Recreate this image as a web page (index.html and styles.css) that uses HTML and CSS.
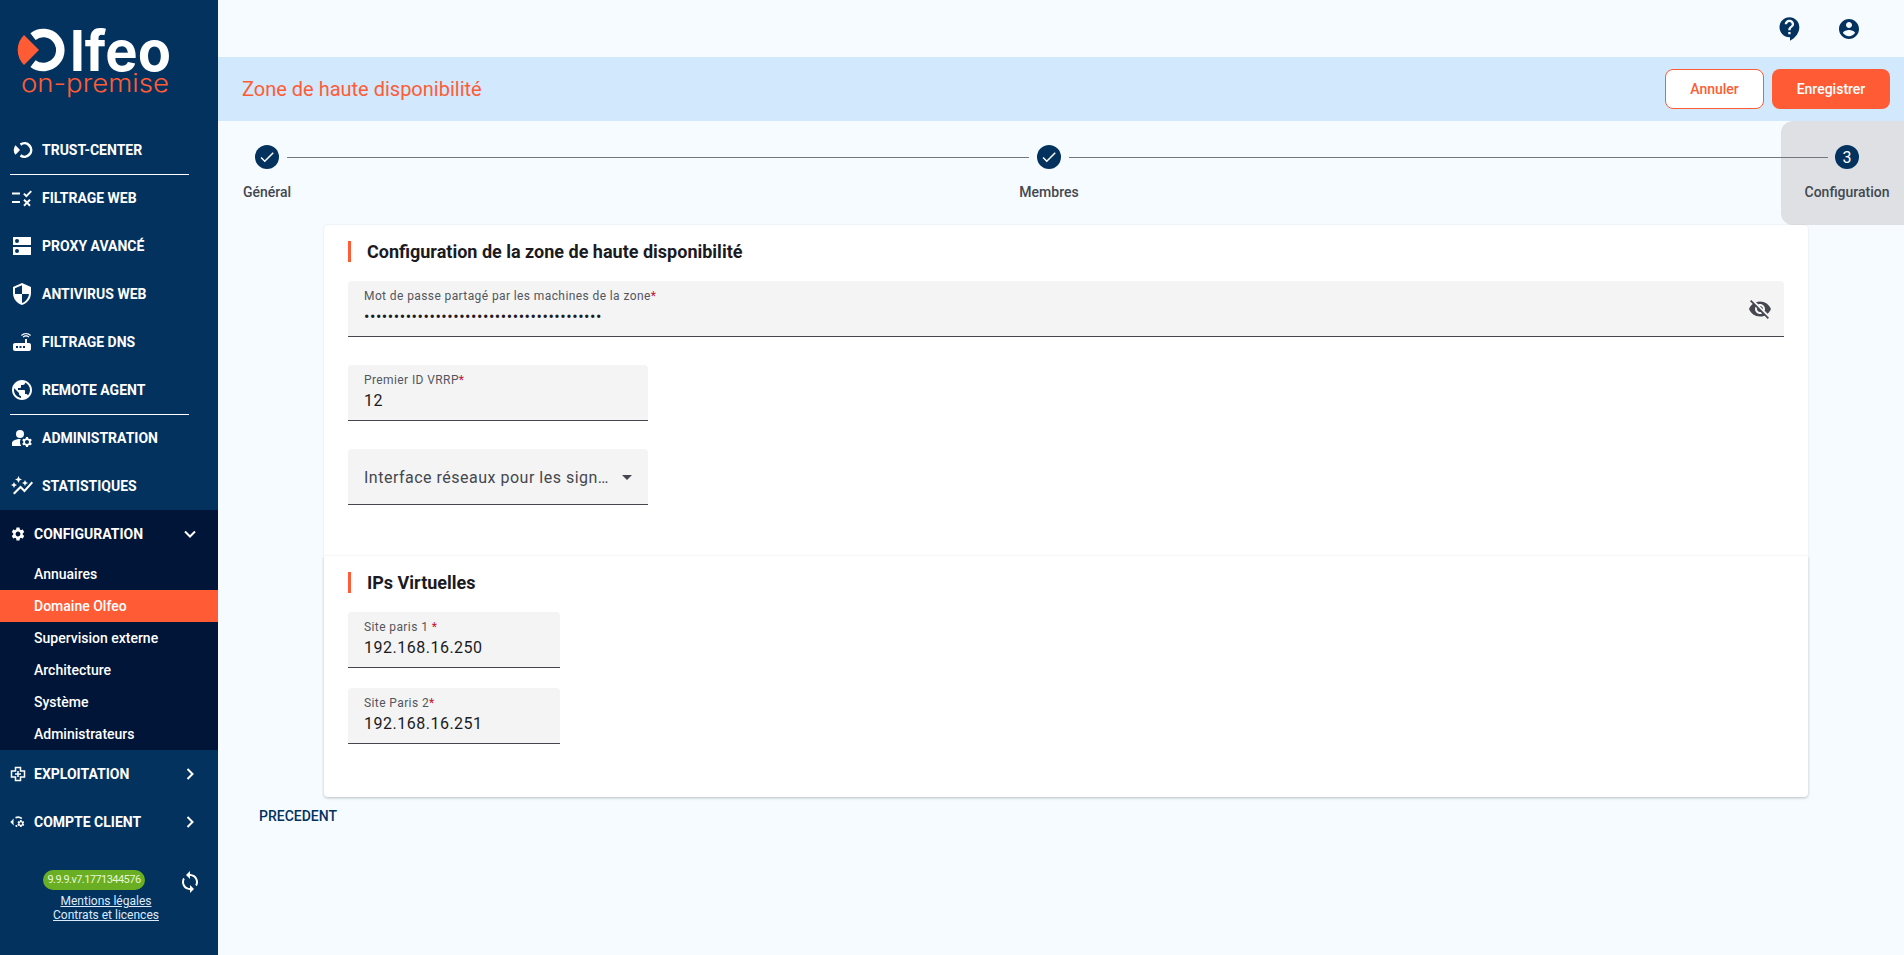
FILE: index.html
```html
<!DOCTYPE html>
<html lang="fr">
<head>
<meta charset="utf-8">
<title>Zone de haute disponibilité</title>
<link rel="stylesheet" href="styles.css">
</head>
<body>
<div class="app">
  <aside class="sidebar">
    <div class="logo">
      <svg class="logo-svg" width="218" height="126" viewBox="0 0 218 126">
        <path class="logo-orange" d="M39 50 L24 35 A21 21 0 0 0 24 65 Z"/>
        <path class="logo-ring" d="M33 36.500 A17 17 0 1 1 33 63.500" />
        <text class="logo-main" x="70" y="70.500" textLength="101" lengthAdjust="spacingAndGlyphs">lfeo</text>
        <text class="logo-sub" x="21" y="92" textLength="148" lengthAdjust="spacingAndGlyphs">on-premise</text>
      </svg>
    </div>
    <nav class="nav">
      <a class="nav-item sep"><span class="ico"><svg width="24" height="24" viewBox="0 0 24 24"><path d="M10 12L5.500 7.300A 7 7 0 0 0 5.500 16.700Z"/><path class="ring-stroke" d="M10.500 6.600A 6.700 6.700 0 1 1 10.500 17.400"/></svg></span><span>TRUST-CENTER</span></a>
      <a class="nav-item"><span class="ico"><svg width="24" height="24" viewBox="0 0 24 24"><path d="M2 6.500h8v2H2zM2 15h8v2H2zM13.200 8.200l1.300-1.300 1.900 1.900 4.200-4.300 1.300 1.300-5.500 5.600zM13.300 14.400l1.400-1.400 2.300 2.300 2.300-2.300 1.400 1.400-2.300 2.300 2.300 2.300-1.400 1.400-2.300-2.300-2.300 2.300-1.400-1.400 2.300-2.300z"/></svg></span><span>FILTRAGE WEB</span></a>
      <a class="nav-item"><span class="ico"><svg width="24" height="24" viewBox="0 0 24 24"><path fill-rule="evenodd" d="M3 3h18v8H3zM3 13h18v8H3zM7 5a2 2 0 1 0 0 4 2 2 0 0 0 0-4zM7 15a2 2 0 1 0 0 4 2 2 0 0 0 0-4z"/></svg></span><span>PROXY AVANCÉ</span></a>
      <a class="nav-item"><span class="ico"><svg width="24" height="24" viewBox="0 0 24 24"><path d="M12 1L3 5v6c0 5.550 3.840 10.740 9 12 5.160-1.260 9-6.450 9-12V5l-9-4zm0 10.990h7c-.53 4.120-3.280 7.790-7 8.940V12H5V6.300l7-3.110v8.800z"/></svg></span><span>ANTIVIRUS WEB</span></a>
      <a class="nav-item"><span class="ico"><svg width="24" height="24" viewBox="0 0 24 24"><path d="M20.200 5.900l.8-.8C19.600 3.700 17.800 3 16 3s-3.600.7-5 2.100l.8.8C13 4.800 14.500 4.200 16 4.200s3 .6 4.200 1.700zm-.9.8c-.9-.9-2.100-1.400-3.300-1.400s-2.400.5-3.300 1.400l.8.8c.7-.7 1.600-1 2.500-1 .9 0 1.800.3 2.500 1l.8-.8zM19 13h-2V9h-2v4H5c-1.100 0-2 .9-2 2v4c0 1.100.9 2 2 2h14c1.100 0 2-.9 2-2v-4c0-1.100-.9-2-2-2zM8 18H6v-2h2v2zm3.500 0h-2v-2h2v2zm3.500 0h-2v-2h2v2z"/></svg></span><span>FILTRAGE DNS</span></a>
      <a class="nav-item sep"><span class="ico"><svg width="24" height="24" viewBox="0 0 24 24"><path d="M12 2C6.480 2 2 6.480 2 12s4.480 10 10 10 10-4.480 10-10S17.520 2 12 2zm-1 17.930c-3.950-.49-7-3.850-7-7.930 0-.62.08-1.210.21-1.790L9 15v1c0 1.100.9 2 2 2v1.930zm6.900-2.540c-.26-.81-1-1.390-1.900-1.390h-1v-3c0-.55-.45-1-1-1H8v-2h2c.55 0 1-.45 1-1V7h2c1.100 0 2-.9 2-2v-.41c2.930 1.190 5 4.060 5 7.410 0 2.080-.8 3.970-2.100 5.390z"/></svg></span><span>REMOTE AGENT</span></a>
      <a class="nav-item"><span class="ico"><svg width="24" height="24" viewBox="0 0 24 24"><circle cx="10" cy="8" r="4"/><path d="M10.670 13.020c-.22-.01-.44-.02-.67-.02-2.420 0-4.680.67-6.610 1.820-.88.52-1.390 1.500-1.390 2.530V20h9.260c-.79-1.130-1.260-2.510-1.260-4 0-1.070.25-2.070.67-2.980z"/><path d="M20.750 16c0-.22-.03-.42-.06-.63l1.140-1.010-1-1.730-1.450.49c-.32-.27-.68-.48-1.080-.63L18 11h-2l-.3 1.490c-.4.15-.76.36-1.080.63l-1.450-.49-1 1.730 1.140 1.010c-.03.21-.06.41-.06.63s.03.42.06.63l-1.140 1.010 1 1.730 1.450-.49c.32.27.68.48 1.080.63L16 21h2l.3-1.490c.4-.15.76-.36 1.080-.63l1.450.49 1-1.730-1.140-1.010c.03-.21.06-.41.06-.63zM17 18c-1.100 0-2-.9-2-2s.9-2 2-2 2 .9 2 2-.9 2-2 2z"/></svg></span><span>ADMINISTRATION</span></a>
      <a class="nav-item"><span class="ico"><svg width="24" height="24" viewBox="0 0 24 24"><path d="M14.060 9.940L12 9l2.060-.94L15 6l.94 2.060L18 9l-2.060.94L15 12l-.94-2.060zM4 14l.94-2.060L7 11l-2.060-.94L4 8l-.94 2.060L1 11l2.060.94L4 14zm4.500-5l1.090-2.410L12 5.500 9.590 4.410 8.500 2 7.410 4.410 5 5.500l2.410 1.090L8.500 9zm-4 11.500l6-6.010 4 4L23 8.930l-1.410-1.410-7.090 7.970-4-4L3 19l1.500 1.500z"/></svg></span><span>STATISTIQUES</span></a>
      <div class="group">
        <a class="nav-item sub-head"><span class="ico small"><svg width="16" height="16" viewBox="0 0 24 24"><path d="M19.140 12.940c.04-.3.06-.61.06-.94 0-.32-.02-.64-.07-.94l2.030-1.580c.18-.14.23-.41.12-.61l-1.920-3.320c-.12-.22-.37-.29-.59-.22l-2.390.96c-.5-.38-1.030-.7-1.620-.94l-.36-2.540c-.04-.24-.24-.41-.48-.41h-3.840c-.24 0-.43.17-.47.41l-.36 2.540c-.59.24-1.130.57-1.620.94l-2.390-.96c-.22-.08-.47 0-.59.22L2.740 8.870c-.12.21-.08.47.12.61l2.030 1.580c-.05.3-.09.63-.09.94s.02.64.07.94l-2.030 1.580c-.18.14-.23.41-.12.61l1.920 3.320c.12.22.37.29.59.22l2.390-.96c.5.38 1.030.7 1.620.94l.36 2.540c.05.24.24.41.48.41h3.840c.24 0 .44-.17.47-.41l.36-2.540c.59-.24 1.130-.56 1.620-.94l2.390.96c.22.08.47 0 .59-.22l1.920-3.320c.12-.22.07-.47-.12-.61l-2.010-1.580zM12 15.600c-1.980 0-3.600-1.620-3.600-3.600s1.620-3.600 3.600-3.600 3.600 1.620 3.600 3.600-1.620 3.600-3.600 3.600z"/></svg></span><span class="grow">CONFIGURATION</span><svg class="chev" width="14" height="14" viewBox="0 0 14 14"><path d="M2 4.500l5 5 5-5"/></svg></a>
        <a class="sub-item">Annuaires</a>
        <a class="sub-item active">Domaine Olfeo</a>
        <a class="sub-item">Supervision externe</a>
        <a class="sub-item">Architecture</a>
        <a class="sub-item">Système</a>
        <a class="sub-item">Administrateurs</a>
      </div>
      <a class="nav-item sub-head"><span class="ico small"><svg class="outline" width="16" height="16" viewBox="0 0 16 16"><path d="M5.500 1.500h5v3.500h4v6h-4v3.500h-5V11h-4V5h4z"/><path d="M8 5v6M5 8h6"/></svg></span><span class="grow">EXPLOITATION</span><svg class="chev" width="14" height="14" viewBox="0 0 14 14"><path d="M4.500 2l5 5-5 5"/></svg></a>
      <a class="nav-item sub-head"><span class="ico small"><svg width="16" height="16" viewBox="0 0 16 16"><path d="M.3 8L4 4.300C3.200 5.500 3.400 10.500 4 11.700Z"/><path class="ring-stroke thin" d="M5.500 3.800A6 6 0 0 1 11.800 4.500M5.600 11.300L7.200 12.600"/><path transform="translate(6.500 5.200) scale(.36)" d="M19.140 12.940c.04-.3.06-.61.06-.94 0-.32-.02-.64-.07-.94l2.030-1.580c.18-.14.23-.41.12-.61l-1.920-3.320c-.12-.22-.37-.29-.59-.22l-2.390.96c-.5-.38-1.030-.7-1.620-.94l-.36-2.540c-.04-.24-.24-.41-.48-.41h-3.840c-.24 0-.43.17-.47.41l-.36 2.540c-.59.24-1.130.57-1.620.94l-2.390-.96c-.22-.08-.47 0-.59.22L2.740 8.870c-.12.21-.08.47.12.61l2.030 1.580c-.05.3-.09.63-.09.94s.02.64.07.94l-2.030 1.580c-.18.14-.23.41-.12.61l1.920 3.320c.12.22.37.29.59.22l2.390-.96c.5.38 1.030.7 1.620.94l.36 2.540c.05.24.24.41.48.41h3.840c.24 0 .44-.17.47-.41l.36-2.540c.59-.24 1.130-.56 1.620-.94l2.390.96c.22.08.47 0 .59-.22l1.920-3.320c.12-.22.07-.47-.12-.61l-2.010-1.580zM12 15.600c-1.980 0-3.600-1.620-3.600-3.600s1.620-3.600 3.600-3.600 3.600 1.620 3.600 3.600-1.620 3.600-3.600 3.600z"/></svg></span><span class="grow">COMPTE CLIENT</span><svg class="chev" width="14" height="14" viewBox="0 0 14 14"><path d="M4.500 2l5 5-5 5"/></svg></a>
    </nav>
    <div class="foot">
      <div class="foot-col">
        <span class="pill">9.9.9.v7.1771344576</span>
        <a class="foot-link first">Mentions légales</a>
        <a class="foot-link">Contrats et licences</a>
      </div>
      <svg class="sync" width="24" height="24" viewBox="0 0 24 24"><path d="M12 4V1L8 5l4 4V6c3.310 0 6 2.690 6 6 0 1.010-.25 1.970-.7 2.800l1.460 1.460C19.540 15.030 20 13.570 20 12c0-4.420-3.580-8-8-8zm0 14c-3.310 0-6-2.690-6-6 0-1.010.25-1.970.7-2.800L5.240 7.740C4.460 8.970 4 10.430 4 12c0 4.420 3.580 8 8 8v3l4-4-4-4v3z"/></svg>
    </div>
  </aside>

  <main class="main">
    <header class="topbar">
      <svg class="top-ico" width="28" height="28" viewBox="0 0 24 24"><path d="M11.500 2C6.810 2 3 5.810 3 10.500S6.810 19 11.500 19h.5v3c4.860-2.340 8-7 8-11.500C20 5.810 16.190 2 11.500 2zm1 14.500h-2v-2h2v2zm0-3.500h-2c0-3.250 3-3 3-5 0-1.100-.9-2-2-2s-2 .9-2 2h-2c0-2.210 1.790-4 4-4s4 1.790 4 4c0 2.500-3 2.750-3 5z"/></svg>
      <svg class="top-ico" width="24" height="24" viewBox="0 0 24 24"><path d="M12 2C6.480 2 2 6.480 2 12s4.480 10 10 10 10-4.480 10-10S17.520 2 12 2zm0 3c1.660 0 3 1.340 3 3s-1.340 3-3 3-3-1.340-3-3 1.340-3 3-3zm0 14.200c-2.500 0-4.710-1.280-6-3.220.03-1.990 4-3.080 6-3.080 1.990 0 5.970 1.090 6 3.080-1.290 1.940-3.500 3.220-6 3.220z"/></svg>
    </header>
    <div class="titlebar">
      <h1 class="page-title">Zone de haute disponibilité</h1>
      <div class="actions">
        <button class="btn ghost">Annuler</button>
        <button class="btn primary">Enregistrer</button>
      </div>
    </div>
    <div class="stepper">
      <div class="step">
        <span class="dot"><svg width="18" height="18" viewBox="0 0 24 24"><path d="M9 16.170L4.830 12l-1.420 1.410L9 19 21 7l-1.410-1.410z"/></svg></span>
        <span class="step-label">Général</span>
      </div>
      <div class="line first"></div>
      <div class="step">
        <span class="dot"><svg width="18" height="18" viewBox="0 0 24 24"><path d="M9 16.170L4.830 12l-1.420 1.410L9 19 21 7l-1.410-1.410z"/></svg></span>
        <span class="step-label">Membres</span>
      </div>
      <div class="line rest"></div>
      <div class="step current">
        <span class="dot">3</span>
        <span class="step-label">Configuration</span>
      </div>
    </div>
    <div class="content">
      <section class="card top">
        <h2 class="sec-title">Configuration de la zone de haute disponibilité</h2>
        <div class="field full">
          <span class="f-label">Mot de passe partagé par les machines de la zone<b>*</b></span>
          <span class="f-dots">••••••••••••••••••••••••••••••••••••••••</span>
          <svg class="eye" width="24" height="24" viewBox="0 0 24 24"><path d="M12 7c2.760 0 5 2.240 5 5 0 .65-.13 1.260-.36 1.830l2.920 2.920c1.510-1.260 2.700-2.890 3.430-4.750-1.730-4.390-6-7.500-11-7.500-1.400 0-2.740.25-3.980.7l2.160 2.160C10.740 7.130 11.350 7 12 7zM2 4.270l2.280 2.280.46.46C3.080 8.300 1.780 10.020 1 12c1.730 4.390 6 7.500 11 7.500 1.550 0 3.030-.3 4.380-.84l.42.42L19.730 22 21 20.730 3.270 3 2 4.270zM7.530 9.800l1.550 1.550c-.05.21-.08.43-.08.65 0 1.660 1.340 3 3 3 .22 0 .44-.03.65-.08l1.550 1.550c-.67.33-1.410.53-2.200.53-2.760 0-5-2.240-5-5 0-.79.2-1.530.53-2.200zm4.310-.78l3.150 3.150.02-.16c0-1.660-1.340-3-3-3l-.17.01z"/></svg>
        </div>
        <div class="field medium gap">
          <span class="f-label">Premier ID VRRP<b>*</b></span>
          <span class="f-value">12</span>
        </div>
        <div class="field medium gap select">
          <span class="f-select">Interface réseaux pour les signaux</span>
          <span class="caret"></span>
        </div>
      </section>
      <section class="card bottom">
        <h2 class="sec-title">IPs Virtuelles</h2>
        <div class="field narrow">
          <span class="f-label">Site paris 1 <b>*</b></span>
          <span class="f-value">192.168.16.250</span>
        </div>
        <div class="field narrow gap-small">
          <span class="f-label">Site Paris 2<b>*</b></span>
          <span class="f-value">192.168.16.251</span>
        </div>
      </section>
      <a class="prev">PRECEDENT</a>
    </div>
  </main>
</div>
</body>
</html>
```
FILE: styles.css
```css
* { box-sizing: border-box; }
html, body { margin: 0; height: 100%; }
body { font-family: Roboto, "Liberation Sans", sans-serif; background: #f6fbff; color: #1b1b1f; }
svg { display: block; flex: none; }
.app { display: flex; height: 955px; overflow: hidden; }

/* Sidebar */
.sidebar { width: 218px; flex: none; background: #03325f; color: #fff; display: flex; flex-direction: column; }
.logo { height: 126px; flex: none; }
.logo-orange { fill: #ff5c35; }
.logo-ring { fill: none; stroke: #fff; stroke-width: 8.500; }
.logo-main { font-family: Inter, sans-serif; font-weight: 700; font-size: 56px; fill: #fff; }
.logo-sub { font-family: Inter, sans-serif; font-weight: 300; font-size: 25px; fill: #ff5c35; }
.nav { display: flex; flex-direction: column; }
.nav-item { position: relative; display: flex; align-items: center; gap: 8px; height: 48px; padding-left: 10px; font-size: 14px; font-weight: 700; color: #fff; }
.nav-item.sep::after { content: ""; position: absolute; left: 10px; width: 179px; bottom: -1px; height: 1px; background: #fff; }
.ico { width: 24px; height: 24px; display: flex; align-items: center; justify-content: center; flex: none; }
.ico.small { width: 16px; }
.ico svg { fill: #fff; }
.ico svg.outline { fill: none; stroke: #fff; stroke-width: 1.500; }
.ico svg .ring-stroke { fill: none; stroke: #fff; stroke-width: 2.600; }
.ico svg .ring-stroke.thin { stroke-width: 1.600; }
.grow { flex: 1; }
.chev { fill: none; stroke: #fff; stroke-width: 2; margin-right: 21px; }
.group { background: #001538; }
.sub-item { display: flex; align-items: center; height: 32px; padding-left: 34px; font-size: 14px; font-weight: 500; color: #fff; }
.sub-item.active { background: #ff5c35; }
.foot { display: flex; align-items: flex-start; padding: 24px 0 0 34px; }
.foot-col { width: 144px; display: flex; flex-direction: column; align-items: center; }
.pill { align-self: flex-start; margin-left: 9px; height: 20px; width: 102px; border-radius: 10px; background: #6aaf23; color: #e8f6d5; font-size: 11px; letter-spacing: -.55px; line-height: 20px; text-align: center; white-space: nowrap; }
.foot-link { font-size: 12px; line-height: 14px; color: #dcecff; text-decoration: underline; }
.foot-link.first { margin-top: 4px; }
.sync { fill: #fff; }

/* Main */
.main { flex: 1; min-width: 0; display: flex; flex-direction: column; }
.topbar { height: 57px; flex: none; display: flex; align-items: center; justify-content: flex-end; gap: 33px; padding: 0 43px 0 0; }
.top-ico { fill: #03325f; }
.titlebar { height: 64px; flex: none; background: #d1e8fd; display: flex; align-items: center; justify-content: space-between; padding: 0 14px 0 24px; }
.page-title { margin: 0; font-size: 20px; font-weight: 400; color: #ff5c35; }
.actions { display: flex; gap: 8px; }
.btn { height: 40px; border-radius: 8px; font-family: inherit; font-size: 14px; font-weight: 500; padding: 0; }
.btn.ghost { width: 99px; background: #fff; color: #ff5c35; border: 1px solid #ff5c35; }
.btn.primary { width: 118px; background: #ff5c35; color: #fff; border: 0; }

/* Stepper */
.stepper { height: 104px; flex: none; display: flex; padding-left: 37px; }
.step { width: 24px; flex: none; display: flex; flex-direction: column; align-items: center; padding-top: 24px; }
.step.current { width: 123px; padding: 24px 45px 0 54px; margin-left: -54px; background: #dee0e4; border-radius: 12px 0 0 12px; }
.dot { width: 24px; height: 24px; flex: none; border-radius: 50%; background: #03325f; color: #fff; display: flex; align-items: center; justify-content: center; font-size: 16px; font-weight: 400; }
.dot svg { fill: #fff; }
.step-label { margin-top: 15px; font-size: 14px; line-height: 16px; font-weight: 500; color: #44474f; white-space: nowrap; }
.line { height: 1px; background: #74777f; margin: 36px 8px 0; position: relative; z-index: 1; }
.line.first { flex: 0 0 742px; }
.line.rest { flex: 1; margin-right: 7px; }

/* Content */
.content { padding: 0 96px 0 106px; display: flex; flex-direction: column; }
.card { background: #fff; padding: 16px 24px 0; box-shadow: 0 1px 3px rgba(0,0,0,.25); }
.card.top { height: 331px; border-radius: 4px 4px 0 0; box-shadow: 0 0 2px rgba(0,0,0,.12); }
.card.bottom { height: 241px; border-radius: 0 0 4px 4px; }
.sec-title { margin: 0 0 19px; height: 21px; border-left: 3px solid #ff5c35; padding-left: 16px; font-size: 18px; line-height: 21px; font-weight: 700; color: #1b1b1f; }
.field { position: relative; height: 56px; background: #f4f4f4; border-radius: 4px 4px 0 0; border-bottom: 1px solid #44474f; padding: 8px 16px 0; display: flex; flex-direction: column; }
.field.full { width: 100%; }
.field.medium { width: 300px; }
.field.narrow { width: 212px; }
.field.gap { margin-top: 28px; }
.field.gap-small { margin-top: 20px; }
.f-label { font-size: 12px; line-height: 14px; letter-spacing: .4px; color: #53565e; }
.f-label b { font-weight: 400; color: #c8102e; }
.f-value { margin-top: 2px; font-size: 16px; line-height: 24px; letter-spacing: .5px; color: #1b1b1f; }
.f-dots { margin-top: 2px; font-size: 16px; line-height: 24px; letter-spacing: .55px; color: #1b1b1f; white-space: nowrap; }
.eye { position: absolute; right: 12px; top: 16px; fill: #44474f; }
.field.select { flex-direction: row; align-items: center; padding: 2px 16px 0; justify-content: space-between; }
.f-select { width: 245px; font-size: 16px; letter-spacing: .5px; color: #44474f; white-space: nowrap; overflow: hidden; text-overflow: ellipsis; }
.caret { width: 0; height: 0; border-left: 5px solid transparent; border-right: 5px solid transparent; border-top: 5px solid #44474f; }
.prev { margin: 11px 0 0 -65px; font-size: 14px; line-height: 16px; font-weight: 500; color: #03325f; }
```
